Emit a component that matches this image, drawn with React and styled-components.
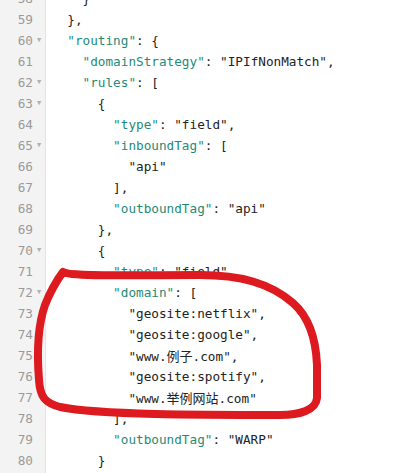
import React from "react";
import styled, { createGlobalStyle } from "styled-components";

const GlobalStyle = createGlobalStyle`
  html, body {
    margin: 0;
    padding: 0;
    background: #ffffff;
  }
`;

const Editor = styled.div`
  position: relative;
  display: flex;
  width: 420px;
  height: 473px;
  overflow: hidden;
  font-family: "DejaVu Sans Mono", "Liberation Mono", "Noto Sans CJK SC", monospace;
  font-size: 12.7px;
`;

const Gutter = styled.div`
  flex: 0 0 45px;
  background: #f3f3f3;
  border-right: 1px solid #e4e4e4;
  color: #9a9a9a;
`;

const CodeArea = styled.div`
  flex: 1;
  padding-left: 6px;
  color: #222222;
`;

const Lines = styled.div`
  margin-top: -12.5px;
`;

const NumberLine = styled.div`
  display: flex;
  justify-content: flex-end;
  align-items: center;
  height: 21px;
`;

const FoldMark = styled.span`
  flex: 0 0 12px;
  font-size: 7px;
  color: #b0b0b0;
  text-align: center;
`;

const CodeLine = styled.div`
  height: 21px;
  line-height: 21px;
  white-space: pre;
`;

const Key = styled.span`
  color: #1f8a78;
`;

const Cjk = styled.span`
  font-family: "Noto Sans CJK SC", sans-serif;
  font-size: 13px;
`;

const Mark = styled.svg`
  position: absolute;
  top: 0;
  left: 0;
  pointer-events: none;
`;

const fold = [60, 62, 63, 65, 70, 72];

const k = (t) => <Key>"{t}"</Key>;

const code = [
  <>{"    }"}</>,
  <>{"  },"}</>,
  <>{"  "}{k("routing")}{": {"}</>,
  <>{"    "}{k("domainStrategy")}{": \"IPIfNonMatch\","}</>,
  <>{"    "}{k("rules")}{": ["}</>,
  <>{"      {"}</>,
  <>{"        "}{k("type")}{": \"field\","}</>,
  <>{"        "}{k("inboundTag")}{": ["}</>,
  <>{"          \"api\""}</>,
  <>{"        ],"}</>,
  <>{"        "}{k("outboundTag")}{": \"api\""}</>,
  <>{"      },"}</>,
  <>{"      {"}</>,
  <>{"        "}{k("type")}{": \"field\","}</>,
  <>{"        "}{k("domain")}{": ["}</>,
  <>{"          \"geosite:netflix\","}</>,
  <>{"          \"geosite:google\","}</>,
  <>{"          \"www."}<Cjk>例子</Cjk>{".com\","}</>,
  <>{"          \"geosite:spotify\","}</>,
  <>{"          \"www."}<Cjk>举例网站</Cjk>{".com\""}</>,
  <>{"        ],"}</>,
  <>{"        "}{k("outboundTag")}{": \"WARP\""}</>,
  <>{"      }"}</>,
];

export default function App() {
  return (
    <>
      <GlobalStyle />
      <Editor>
        <Gutter>
          <Lines>
            {code.map((_, i) => (
              <NumberLine key={i}>
                <span>{58 + i}</span>
                <FoldMark>{fold.includes(58 + i) ? "▼" : ""}</FoldMark>
              </NumberLine>
            ))}
          </Lines>
        </Gutter>
        <CodeArea>
          <Lines>
            {code.map((c, i) => (
              <CodeLine key={i}>{c}</CodeLine>
            ))}
          </Lines>
        </CodeArea>
        <Mark width="420" height="473" viewBox="0 0 420 473">
          <path
            d="M63 272 C70 277 140 275 200 275 C240 275 270 283 293 303 C310 318 316 340 317 365 L317 398 C316 410 300 415 280 415 C200 415 100 415 60 407 C45 403 40 397 39 380 C37 355 38 325 45 305 C51 290 57 280 63 272 Z"
            fill="none"
            stroke="#dc1a1f"
            strokeWidth="8"
            strokeLinecap="round"
            strokeLinejoin="round"
          />
        </Mark>
      </Editor>
    </>
  );
}
